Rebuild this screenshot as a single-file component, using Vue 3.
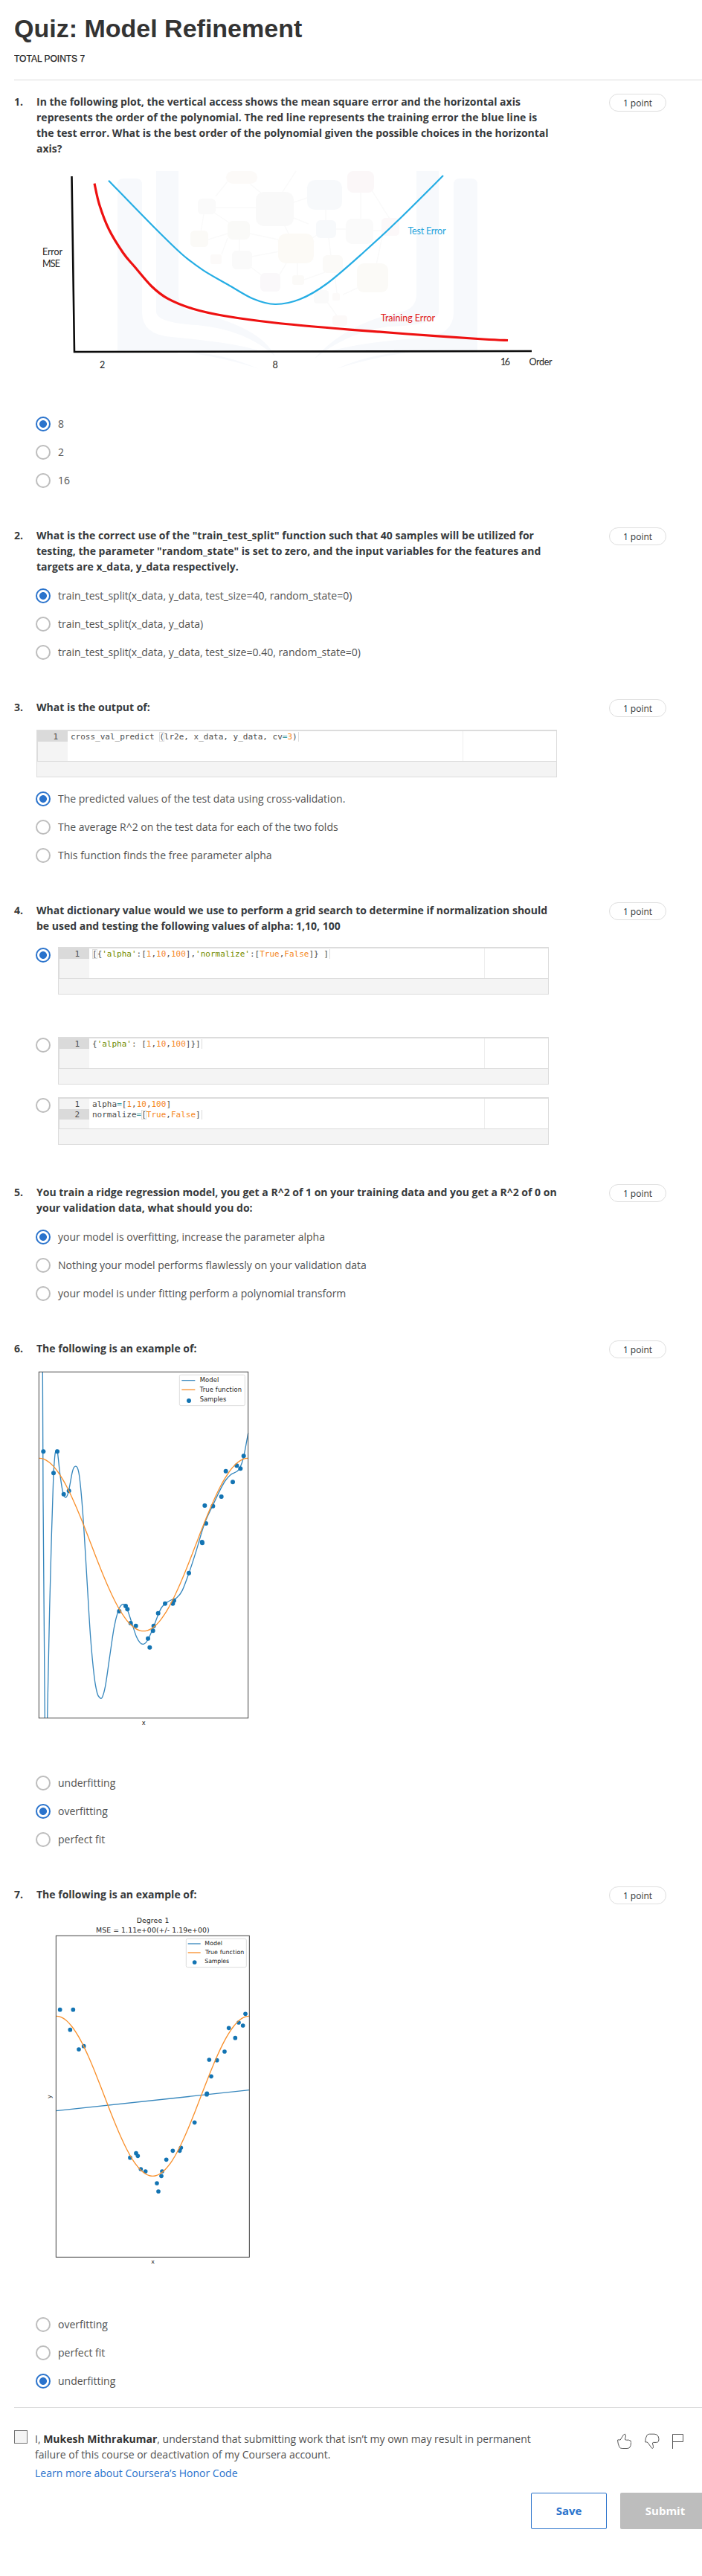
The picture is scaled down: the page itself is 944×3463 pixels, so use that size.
<script setup>
function smooth(points) {
  let d = `M${points[0][0]} ${points[0][1]}`
  for (let i = 0; i < points.length - 1; i++) {
    const a = points[i - 1] || points[i]
    const b = points[i]
    const c = points[i + 1]
    const e = points[i + 2] || c
    d += `C${b[0] + (c[0] - a[0]) / 6} ${b[1] + (c[1] - a[1]) / 6} ${c[0] - (e[0] - b[0]) / 6} ${c[1] - (e[1] - b[1]) / 6} ${c[0]} ${c[1]}`
  }
  return d
}

function cosine(x0, x1, top, bottom) {
  const pts = []
  for (let i = 0; i <= 60; i++) {
    const t = i / 60
    pts.push([x0 + (x1 - x0) * t, (top + bottom) / 2 - ((bottom - top) / 2) * Math.cos(2 * Math.PI * t)])
  }
  return smooth(pts)
}

const trainPath = smooth([[127, 246.7], [133.6, 275], [146.3, 308], [165.6, 340], [181, 358.5], [204, 385], [226, 401.7], [259, 415], [301, 424.5], [370, 434], [457, 442], [548, 449], [650, 456], [683, 457.5]])
const testPath = smooth([[146, 242.7], [206.7, 305], [245, 342], [273.3, 363.3], [306.7, 382.7], [340, 401.5], [370, 409], [403.3, 402.3], [440, 381], [490, 338.3], [540, 291.7], [596, 236]])

const nodes = [
  [304, 230, 42, 17, '#fcfaf8'], [344, 258, 51, 46, '#f9f9f9'], [413, 242, 47, 40, '#f7f9fb'], [467, 230, 36, 29, '#fbf7f8'],
  [266, 267, 24, 21, '#fafafa'], [306, 297, 30, 25, '#fafaf8'], [256, 310, 24, 22, '#fbfaf7'], [374, 314, 48, 40, '#fcfaf6'],
  [425, 296, 27, 24, '#f7f9fb'], [465, 294, 37, 34, '#fafafa'], [513, 293, 24, 24, '#fcf8f9'], [283, 342, 15, 13, '#fcfaf9'],
  [312, 337, 27, 25, '#fafafa'], [350, 367, 27, 25, '#faf8fa'], [434, 343, 27, 24, '#fbfaf8'], [480, 354, 42, 39, '#fbfaf7'],
  [393, 370, 16, 13, '#fbfaf8'], [422, 390, 20, 18, '#fafafa'], [447, 424, 20, 14, '#fcf9f8'], [447, 394, 10, 10, '#fcfaf9']
]
const links = 'M290 264l16-20M336 247l18 15M290 279h54M288 286l24 16M274 288l-4 24M380 258l18-28M395 272l18-6M395 293l20 8M382 302l7 14M336 314l38 8M280 322l26-8M306 320l-8 22M322 321v18M338 345l38-7M336 358l18 14M373 374l12-20M400 353v18M420 320l18-12M452 308h14M438 280v18M442 320l3 24M485 259v36M500 256l24 38M502 310h14M514 318l-8 38M409 376l28-10M450 368l3 26M461 396l20-9M440 406l14 20'

const model6 = 'M82 43L84 560L91 1439M101 1439L110 1000L118 700L126 450' + smooth([[126, 450], [132, 375], [137, 361], [142, 366], [152, 455], [164, 530], [176, 549], [187, 523], [201, 450], [209, 427], [221, 427], [230, 462], [240, 560], [250, 700], [262, 900], [275, 1110], [290, 1270], [302, 1338], [312, 1356], [322, 1356], [335, 1310], [352, 1195], [370, 1075], [385, 1012], [398, 985], [412, 982], [425, 1005], [440, 1050], [460, 1110], [475, 1135], [488, 1141], [500, 1133], [512, 1112], [530, 1070], [548, 1022], [562, 993], [580, 975], [600, 963], [622, 955], [645, 925], [672, 855], [700, 770], [735, 655], [770, 578], [800, 515], [820, 480], [840, 458], [865, 445], [878, 430], [893, 385], [911, 290]])

const samples6 = [[85, 364], [141, 364], [126, 451], [167, 536], [188, 523], [391, 1008], [417, 987], [424, 1000], [437, 1056], [458, 1067], [507, 1118], [514, 1154], [527, 1087], [530, 1067], [548, 1016], [576, 977], [607, 977], [612, 965], [672, 854], [725, 729], [726, 733], [741, 654], [736, 582], [769, 584], [803, 546], [821, 443], [849, 487], [865, 421], [880, 433], [893, 382]]
const samples7 = [[152, 410], [205, 410], [193, 491], [228, 570], [248, 557], [435, 1007], [459, 989], [466, 1000], [478, 1053], [497, 1062], [543, 1110], [549, 1143], [561, 1081], [564, 1062], [581, 1015], [607, 979], [635, 979], [640, 967], [695, 865], [745, 748], [744, 752], [762, 679], [754, 612], [785, 614], [816, 579], [833, 484], [859, 524], [873, 462], [890, 474], [900, 427]]

const tokens = (...parts) => parts.map((p) => (Array.isArray(p) ? { c: p[0], t: p[1] } : { c: '', t: p }))

const questions = [
  {
    lines: [
      'In the following plot, the vertical access shows the mean square error and the horizontal axis',
      'represents the order of the polynomial. The red line represents the training error the blue line is',
      'the test error. What is the best order of the polynomial given the possible choices in the horizontal',
      'axis?'
    ],
    figure: 'error',
    options: ['8', '2', '16'],
    picked: 0
  },
  {
    lines: [
      'What is the correct use of the "train_test_split" function such that 40 samples will be utilized for',
      'testing, the parameter "random_state" is set to zero, and the input variables for the features and',
      'targets are x_data, y_data respectively.'
    ],
    options: [
      'train_test_split(x_data, y_data, test_size=40, random_state=0)',
      'train_test_split(x_data, y_data)',
      'train_test_split(x_data, y_data, test_size=0.40, random_state=0)'
    ],
    picked: 0
  },
  {
    lines: ['What is the output of:'],
    code: [tokens('cross_val_predict ', ['match', '('], 'lr2e, x_data, y_data, cv', ['op', '='], ['lit', '3'], ')', ['caret', ''])],
    options: [
      'The predicted values of the test data using cross-validation.',
      'The average R^2 on the test data for each of the two folds',
      'This function finds the free parameter alpha'
    ],
    picked: 0
  },
  {
    lines: [
      'What dictionary value would we use to perform a grid search to determine if normalization should',
      'be used and testing the following values of alpha: 1,10, 100'
    ],
    codeOptions: [
      [tokens(['match', '['], '{', ['str', "'alpha'"], ':[', ['lit', '1'], ',', ['lit', '10'], ',', ['lit', '100'], '],', ['str', "'normalize'"], ':[', ['lit', 'True'], ',', ['lit', 'False'], ']} ]', ['caret', ''])],
      [tokens('{', ['str', "'alpha'"], ': [', ['lit', '1'], ',', ['lit', '10'], ',', ['lit', '100'], ']}]', ['caret', ''])],
      [
        tokens('alpha', ['op', '='], '[', ['lit', '1'], ',', ['lit', '10'], ',', ['lit', '100'], ']'),
        tokens('normalize', ['op', '='], ['match', '['], ['lit', 'True'], ',', ['lit', 'False'], ']', ['caret', ''])
      ]
    ],
    picked: 0
  },
  {
    lines: [
      'You train a ridge regression model, you get a R^2 of 1 on your training data and you get a R^2 of 0 on',
      'your validation data, what should you do:'
    ],
    options: [
      'your model is overfitting, increase the parameter alpha',
      'Nothing your model performs flawlessly on your validation data',
      'your model is under fitting perform a polynomial transform'
    ],
    picked: 0
  },
  { lines: ['The following is an example of:'], figure: 'over', options: ['underfitting', 'overfitting', 'perfect fit'], picked: 1 },
  { lines: ['The following is an example of:'], figure: 'under', options: ['overfitting', 'perfect fit', 'underfitting'], picked: 2 }
]
</script>

<template>
  <main class="page">
    <header class="head">
      <h1>Quiz: Model Refinement</h1>
      <p class="total">TOTAL POINTS 7</p>
    </header>

    <section v-for="(q, qi) in questions" :key="qi" class="question">
      <span class="num">{{ qi + 1 }}.</span>
      <div class="body">
        <h2><span v-for="(l, li) in q.lines" :key="li" class="line">{{ l }}</span></h2>

        <svg v-if="q.figure === 'error'" class="fig" width="700" height="331" viewBox="49 210 700 331">
          <g fill="#f7f9fc">
            <path d="M158 472V248q0-8 8-8h17q8 0 8 8V420q0 30 40 33q90 8 122 20z" />
            <path d="M210 230h30V395q0 20 20 24q90 20 110 60q-40-36-105-42q-55-3-55-18z" />
            <path d="M642 472V248q0-8-8-8h-16q-8 0-8 8V420q0 30-40 34q-85 6-130 19z" />
            <path d="M590 230h-30V395q0 20-20 24q-75 15-118 64q45-36 100-44q68-2 68-20z" />
            <path d="M240 472q60 2 108 24q-45-15-108-24z" />
            <path d="M560 472q-60 2-108 24q45-15 108-24z" />
          </g>
          <path :d="links" fill="none" stroke="#fafafa" stroke-width="1.5" />
          <rect v-for="(n, i) in nodes" :key="i" :x="n[0]" :y="n[1]" :width="n[2]" :height="n[3]" :rx="n[2] * 0.22" :fill="n[4]" />
          <path d="M96.5 237L100 473L715 472" fill="none" stroke="#0b0b0b" stroke-width="2.6" />
          <path :d="trainPath" fill="none" stroke="#ee1111" stroke-width="3.2" />
          <path :d="testPath" fill="none" stroke="#25ade4" stroke-width="2.2" />
          <g class="axis-text" fill="#222">
            <text x="57" y="343" textLength="27">Error</text>
            <text x="57" y="359" textLength="24">MSE</text>
            <text x="134" y="495">2</text>
            <text x="366.500" y="494.5">8</text>
            <text x="673" y="491" textLength="13">16</text>
            <text x="711.5" y="491" textLength="31">Order</text>
            <text x="548.5" y="315" textLength="51" fill="#25a5dd">Test Error</text>
            <text x="512" y="432" textLength="73" fill="#e02020">Training Error</text>
          </g>
        </svg>

        <svg v-if="q.figure === 'over'" class="fig" width="300" height="545" viewBox="57 -21 900 1635">
          <path :d="model6" class="model" />
          <circle v-for="(s, i) in samples6" :key="i" :cx="s[0]" :cy="s[1]" r="9" class="dot" />
          <path :d="cosine(67, 911, 391, 1088)" class="truth" />
          <rect x="67" y="43" width="844" height="1396" class="frame" />
          <rect x="634" y="55" width="264" height="124" rx="6" class="legend" />
          <path d="M643 77H697" class="model" />
          <path d="M643 115H697" class="truth" />
          <circle cx="672" cy="159" r="9" class="dot" />
          <g class="plot-text" font-size="25">
            <text x="716" y="85" textLength="77">Model</text>
            <text x="716" y="123" textLength="169">True function</text>
            <text x="716" y="161" textLength="107">Samples</text>
            <text x="482" y="1468">x</text>
          </g>
        </svg>

        <svg v-if="q.figure === 'under'" class="fig" width="300" height="539" viewBox="57 -24 900 1617">
          <path d="M136 818L916 734" class="model" />
          <circle v-for="(s, i) in samples7" :key="i" :cx="s[0]" :cy="s[1]" r="8.5" class="dot" />
          <path :d="cosine(136, 916, 436, 1081)" class="truth" />
          <rect x="136" y="112" width="780" height="1296" class="frame" />
          <rect x="661" y="124" width="243" height="115" rx="6" class="legend" />
          <path d="M668 144H719" class="model" />
          <path d="M668 180H719" class="truth" />
          <circle cx="695" cy="219" r="8.5" class="dot" />
          <g class="plot-text" font-size="23.5">
            <text x="736" y="151" textLength="71">Model</text>
            <text x="738" y="186" textLength="157">True function</text>
            <text x="736" y="222" textLength="98">Samples</text>
            <text x="520" y="1434">x</text>
            <text x="0" y="0" transform="translate(118 768) rotate(-90)">y</text>
          </g>
          <g class="plot-text" font-size="28">
            <text x="461" y="61" textLength="131">Degree 1</text>
            <text x="297" y="99" textLength="458">MSE = 1.11e+00(+/- 1.19e+00)</text>
          </g>
        </svg>

        <div v-if="q.code" class="editor spaced">
          <div class="pane">
            <div class="gutter"><span v-for="(r, ri) in q.code" :key="ri" :class="['ln', { on: ri === q.code.length - 1 }]">{{ ri + 1 }}</span></div>
            <div class="code"><div v-for="(r, ri) in q.code" :key="ri" class="row"><span v-for="(t, ti) in r" :key="ti" :class="t.c">{{ t.t }}</span></div></div>
          </div>
          <div class="status"></div>
        </div>

        <ul v-if="q.options" class="options">
          <li v-for="(o, oi) in q.options" :key="oi">
            <span :class="['radio', { on: oi === q.picked }]"></span><span class="label">{{ o }}</span>
          </li>
        </ul>

        <ul v-if="q.codeOptions" class="options coded">
          <li v-for="(lines, oi) in q.codeOptions" :key="oi">
            <span :class="['radio', { on: oi === q.picked }]"></span>
            <div class="editor">
              <div class="pane">
                <div class="gutter"><span v-for="(r, ri) in lines" :key="ri" :class="['ln', { on: ri === lines.length - 1 }]">{{ ri + 1 }}</span></div>
                <div class="code"><div v-for="(r, ri) in lines" :key="ri" class="row"><span v-for="(t, ti) in r" :key="ti" :class="t.c">{{ t.t }}</span></div></div>
              </div>
              <div class="status"></div>
            </div>
          </li>
        </ul>
      </div>
      <span class="pill">1 point</span>
    </section>

    <footer class="foot">
      <div class="honor">
        <span class="check"></span>
        <div class="pledge">
          <p>I, <b>Mukesh Mithrakumar</b>, understand that submitting work that isn’t my own may result in permanent<br />failure of this course or deactivation of my Coursera account.</p>
          <a>Learn more about Coursera’s Honor Code</a>
        </div>
        <div class="icons">
          <svg width="20" height="22" viewBox="0 0 20 22"><path d="M.5 9.200Q2.400 8.400 4 9.200L8.400 2.300Q10.800 -.3 11.500 2.800Q11.600 5 10.400 8Q10.500 9.200 12.500 9.200H15.500Q19 9.600 18.500 12.500Q18.700 17 16.500 19.500Q15 20.500 13 20.500H6.500Q4 20.500 2.800 18.500Q.8 14 .5 9.200Z" /></svg>
          <svg width="20" height="22" viewBox="0 0 20 22"><path d="M.8 12Q.5 6.500 3.200 2.500Q4.500 1.200 6.500 1.200H13Q16.500 1.300 18 4Q19.800 8 18.500 11Q17.500 12.400 15.500 12.400H11.500Q10.300 12.600 10.500 14Q12 18 11.300 19.700Q10.500 21.300 9 19.500L4 12.500Q2.500 11.700 .8 12Z" /></svg>
          <svg width="20" height="22" viewBox="0 0 20 22"><path d="M.5 21V1.500H14.500V11.500H.5" /></svg>
        </div>
      </div>
      <div class="actions">
        <button class="save">Save</button>
        <button class="submit">Submit</button>
      </div>
    </footer>
  </main>
</template>

<style>
body { margin: 0; background: #fff; }
</style>

<style scoped>
.page { width: 944px; height: 3463px; box-sizing: border-box; padding-left: 19px; overflow: hidden; background: #fff; color: #373a3c; font: 14px/21px "Open Sans", sans-serif; }
.head { height: 107px; border-bottom: 1px solid #dcdcdc; margin-bottom: 18px; overflow: hidden; }
h1 { margin: 18px 0 0; font: bold 34px/40px "Liberation Sans", Arial, sans-serif; color: #333; }
.total { margin: 14px 0 0; font: 12px/14px "Liberation Sans", Arial, sans-serif; color: #222; -webkit-text-stroke: 0.25px #222; }
.question { display: flex; align-items: flex-start; margin-bottom: 44px; }
.num { width: 30px; flex: none; font-weight: 700; color: #373a3c; }
.body { width: 700px; flex: none; }
h2 { margin: 0; font-size: 14px; font-weight: 700; line-height: 21px; color: #373a3c; }
.line { display: block; white-space: nowrap; }
.fig { display: block; }
.pill { box-sizing: border-box; width: 77px; height: 24px; margin-left: 70px; border: 1px solid #dedede; border-radius: 12px; text-align: center; font-size: 12px; line-height: 24px; color: #333; }
.options { list-style: none; margin: 10px 0 0; padding: 0; }
.options li { display: flex; align-items: flex-start; height: 38px; margin-left: -1px; }
.radio { box-sizing: border-box; width: 20px; height: 20px; margin: 9px 10px 0 0; border: 2px solid #bdbdbd; border-radius: 50%; flex: none; }
.radio.on { border-color: #2a73cc; background: radial-gradient(circle, #2a73cc 4.6px, #fff 5.3px); }
.label { line-height: 21px; margin-top: 8px; color: #525252; white-space: nowrap; }
.coded li { height: 81px; }
.coded li:first-child { height: 121px; }
.coded .editor { width: 660px; margin-top: 8px; }
.editor { box-sizing: border-box; width: 700px; height: 64px; border: 1px solid #dcdcdc; border-top-width: 2px; display: flex; flex-direction: column; }
.editor.spaced { margin-top: 20px; }
.pane { height: 40px; display: flex; border-bottom: 1px solid #dcdcdc; }
.gutter { width: 41px; background: linear-gradient(90deg, #dcdcdc 1px, #f4f4f4 1px); display: flex; flex-direction: column; }
.ln { height: 14px; padding-right: 13px; text-align: right; font: 11px/15px "DejaVu Sans Mono", monospace; color: #4d4d4c; }
.ln.on { background: #dadada; }
.code { flex: 1; padding-left: 4px; font: 11px/15px "DejaVu Sans Mono", monospace; color: #4d4d4c; background: linear-gradient(90deg, transparent 531px, #eee 531px, #eee 532px, transparent 532px); }
.row { height: 14px; white-space: pre; }
.str { color: #718c00; }
.lit { color: #f5871f; }
.op { color: #3e999f; }
.match { box-shadow: inset 0 0 0 1px #ddd; }
.caret { border-left: 1px solid #ddd; margin-left: 1px; }
.status { flex: 1; background: #f4f4f4; }
.axis-text { font: 12.5px "Lato", sans-serif; }
.plot-text { font-family: "DejaVu Sans", sans-serif; fill: #222; }
.model { fill: none; stroke: #3787bd; stroke-width: 4; }
.truth { fill: none; stroke: #f9902c; stroke-width: 4; }
.dot { fill: #1374b3; }
.frame { fill: none; stroke: #444; stroke-width: 3; }
.legend { fill: #fff; stroke: #d5d5d5; stroke-width: 2.5; }
.foot { border-top: 1px solid #dcdcdc; margin-top: -28px; padding-top: 30px; }
.honor { display: flex; align-items: flex-start; height: 84px; }
.check { box-sizing: border-box; width: 18px; height: 18px; border: 1px solid #757575; background: #f4f4f4; margin-right: 10px; flex: none; }
.pledge { width: 783px; color: #525252; }
.pledge p { margin: 1px 0 4px; white-space: nowrap; }
.pledge b { font-weight: 700; color: #333; }
.pledge a { color: #2a73cc; }
.icons { display: flex; gap: 17px; padding-top: 4px; }
.icons svg { fill: none; stroke: #555; stroke-width: 1; }
.actions { display: flex; gap: 18px; margin-left: 695px; }
button { box-sizing: border-box; flex: none; height: 49px; padding: 0; border-radius: 2px; font: 700 15px/47px "Open Sans", sans-serif; }
.save { width: 102px; border: 1px solid #2a73cc; background: #fff; color: #2a73cc; }
.submit { width: 121px; border: 0; background: #bdbdbd; color: #fff; }
</style>
